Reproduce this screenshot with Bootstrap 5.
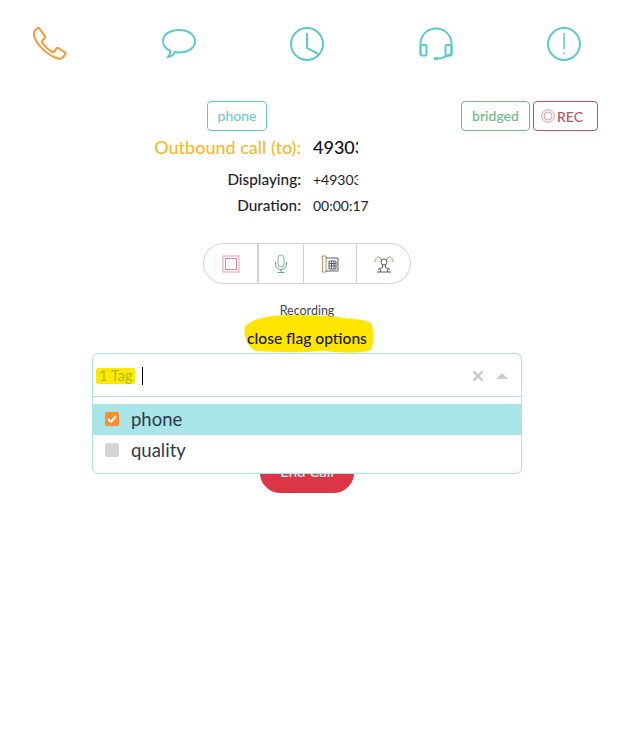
<!DOCTYPE html>
<html lang="en">
<head>
  <meta charset="utf-8" />
  <meta name="viewport" content="width=device-width, initial-scale=1" />
  <title>Call</title>
  <link href="https://cdn.jsdelivr.net/npm/bootstrap@5.3.6/dist/css/bootstrap.min.css" rel="stylesheet" crossorigin="anonymous" />
  <style>
    body { font-family: Lato, "Noto Sans", sans-serif; color: #212529; background: #fff; }
    .top-icons { padding: 27px 45px 0 33px; height: 101px; }
    .top-icons svg { width: 34px; height: 34px; fill: none; stroke: #5cc9d0; stroke-width: 2; display: block; }
    .tag-row { padding: 0 28px 0 207px; height: 30px; }
    .tag-box { height: 30px; line-height: 27px; padding: 0 7px; font-size: 14px; font-weight: 500; border: 1px solid; border-radius: 4px; background: #fff; }
    .tag-phone { color: #6ccad0; border-color: #5cc9d0; width: 60px; text-align: center; }
    .tag-bridged { color: #6dbb85; border-color: #6dbb85; width: 69px; text-align: center; margin-right: -1px; }
    .tag-rec { color: #b85562; border-color: #b85562; width: 65px; gap: 2px; }
    .info-label { width: 301px; text-align: right; font-size: 15.3px; font-weight: 500; }
    .info-value { margin-left: 12px; font-size: 14px; white-space: nowrap; }
    .info-clip { width: 45px; overflow: hidden; }
    .info-main { height: 32px; }
    .info-main .info-label { color: #fdb72b; font-size: 18px; }
    .info-main .info-value { font-size: 18px; font-weight: 500; color: #111; }
    .info-sub { height: 26px; }
    .info-first { margin-top: 3px; }
    .call-col { padding-right: 12px; }
    .tool-group { width: 208px; height: 41px; margin-top: 25px; border: 1px solid #d2d2d2; border-radius: 21px; }
    .tool-cell { border-left: 1px solid #d2d2d2; }
    .tool-cell:first-child { border-left: 0; width: 53px; }
    .tool-cell:nth-child(2) { width: 46px; border-left-width: 2px; }
    .tool-cell:nth-child(3) { width: 53px; }
    .tool-cell:nth-child(4) { flex: 1; }
    .tool-cell svg { width: 20px; height: 20px; fill: none; stroke-width: 1; display: block; }
    .rec-label { margin-top: 19px; font-size: 12.5px; line-height: 15px; color: #444; }
    .flag-wrap { height: 35px; width: 130px; }
    .flag-blob { position: absolute; left: 2px; top: -3px; width: 130px; height: 38px; fill: #ffe600; }
    .flag-text { display: block; position: relative; font-size: 15.6px; font-weight: 500; line-height: 40px; color: #1a1a1a; white-space: nowrap; }
    .select-wrap { width: 430px; }
    .select-control { height: 44px; border: 1px solid #a9e4e6; border-bottom: 0; border-radius: 6px 6px 0 0; background: #fff; padding: 0 7px 0 3px; }
    .select-count { background: #ffe900; border-radius: 2px; color: #adbd12; font-size: 14.5px; line-height: 16px; padding: 0 1px 0 3px; width: 39px; white-space: nowrap; }
    .select-caret { width: 1px; height: 18px; background: #000; margin-left: 7px; }
    .select-clear { width: 12px; height: 12px; margin-right: 12px; }
    .select-arrow { width: 0; height: 0; border-left: 6px solid transparent; border-right: 6px solid transparent; border-bottom: 6px solid #ccc; margin-right: 6px; }
    .select-menu { position: absolute; left: 0; right: 0; top: 43px; z-index: 3; height: 78px; padding-top: 7px; background: #fff; border: 1px solid #a9e4e6; border-radius: 0 0 6px 6px; }
    .select-menu .list-group-item { height: 31px; padding: 0 0 2px 12px; border: 0; border-radius: 0; color: #2c3a4a; font-size: 18.5px; line-height: 28px; background: transparent; }
    .select-menu .list-group-item.is-on { background: #a9e4e6; }
    .opt-check { width: 14px; height: 14px; border-radius: 2px; background: #d5d5d5; margin-right: 12px; flex: none; }
    .is-on .opt-check { background: #fd8d2d; }
    .end-call { width: 94px; height: 40px; margin-top: 56px; border-radius: 20px; padding: 0 0 3px; font-size: 15px; }
  </style>
</head>
<body>
  <div class="d-flex justify-content-between top-icons">
    <svg viewBox="0 0 34 34" style="stroke:#fd9436"><path d="M6 1 L12 9.500 Q12.500 11 9.500 13.500 Q8 14.500 11 18 Q15 23 19.500 25 Q21.500 25.500 23 22 Q24 20 26 21.500 L32 25.500 Q33 26.500 31.500 28.500 L29 31 Q27 32.500 23 31 Q13 27 6 18 Q0 10 1 5.500 Q1.500 3.500 4 1.500 Q5 .5 6 1 Z"/></svg>
    <svg viewBox="0 0 34 34"><path d="M1 14 C1 7.500 8 3 17 3 C26 3 33 7.500 33 14.500 C33 21 26 25.500 17 25.500 C15.500 25.500 14 25.300 13 25 C11.500 27.500 9 29.500 6 30 C7.500 28 8.500 26 8.300 23.800 C3.800 21.800 1 18.500 1 14 Z"/></svg>
    <svg viewBox="0 0 34 34"><circle cx="17" cy="17" r="16"/><path d="M17 6 V21 L28 27"/></svg>
    <svg viewBox="0 0 34 34"><path d="M1.500 27 V17 C1.500 8 8.500 1.500 17 1.500 C25.500 1.500 32.500 8 32.500 17 V27"/><rect x="1.500" y="18" width="6" height="10.500" rx="1"/><rect x="26.500" y="18" width="6" height="10.500" rx="1"/><path d="M32.500 27 L22 31.500 H15" /><path d="M19 31.500 H15" stroke-width="3"/></svg>
    <svg viewBox="0 0 34 34"><circle cx="17" cy="17" r="16"/><path d="M17 6 V22 M17 25.500 V27" stroke="#7fd4ea"/></svg>
  </div>

  <div class="d-flex justify-content-between tag-row">
    <span class="tag-box tag-phone">phone</span>
    <div class="d-flex gap-1">
      <span class="tag-box tag-bridged">bridged</span>
      <span class="tag-box tag-rec d-flex align-items-center">
        <svg width="14" height="14" viewBox="0 0 14 14" fill="none" stroke="#e58c95" stroke-width=".9"><circle cx="7" cy="7" r="6.300"/><circle cx="7" cy="7" r="4"/></svg>REC
      </span>
    </div>
  </div>

  <div class="d-flex align-items-center info-main">
    <span class="info-label">Outbound call (to):</span>
    <span class="info-value info-clip">49303</span>
  </div>
  <div class="d-flex align-items-center info-sub info-first">
    <span class="info-label">Displaying:</span>
    <span class="info-value info-clip">+49303</span>
  </div>
  <div class="d-flex align-items-center info-sub">
    <span class="info-label">Duration:</span>
    <span class="info-value">00:00:17</span>
  </div>

  <div class="d-flex flex-column align-items-center call-col">
    <div class="d-flex tool-group">
      <div class="tool-cell d-flex align-items-center justify-content-center">
        <svg viewBox="0 0 20 20" stroke="#ee9aa5"><rect x="2" y="2" width="16" height="16"/><rect x="4.500" y="4.500" width="11" height="11" stroke="#c98bc4"/></svg>
      </div>
      <div class="tool-cell d-flex align-items-center justify-content-center">
        <svg viewBox="0 0 20 20" stroke="#5fb07a"><rect x="7" y="1" width="6" height="12" rx="3" stroke="#7fb8c8"/><path d="M4.500 8 V10 C4.500 13.500 7 15.500 10 15.500 C13 15.500 15.500 13.500 15.500 10 V8 M10 15.500 V18.500 M6.500 18.500 H13.500"/></svg>
      </div>
      <div class="tool-cell d-flex align-items-center justify-content-center">
        <svg viewBox="0 0 20 20" stroke="#55606e"><path d="M2 2 H6 V18 H2 C3 13 3 7 2 2 Z" stroke="#c08a5a"/><path d="M6 4 H18 V17 H6"/><path d="M9 7 H16 V15 H9 Z M9 9.500 H16 M9 12 H16 M11.500 7 V15 M14 7 V15"/></svg>
      </div>
      <div class="tool-cell d-flex align-items-center justify-content-center">
        <svg viewBox="0 0 20 20" stroke="#55606e"><circle cx="10" cy="8" r="3"/><path d="M8.500 11 V13.500 L4 15.500 M11.500 11 V13.500 L16 15.500 M3 18 H17 M6.500 15.500 V18 M13.500 15.500 V18"/><path d="M1 8 C1.500 4 3.500 2.500 5 3 C6.500 3.500 7 5 7 6 M19 8 C18.500 4 16.500 2.500 15 3 C13.500 3.500 13 5 13 6" stroke="#c08a5a"/></svg>
      </div>
    </div>
    <div class="rec-label">Recording</div>
    <div class="position-relative flag-wrap text-center">
      <svg class="flag-blob" viewBox="0 0 130 38"><path d="M1 11 C10 3 25 0 50 0 C70 0 90 1 100 3 C110 4 122 5 127 8 C130 14 130 28 127 35 C115 39 100 38 80 36 C50 38 30 37 12 36 C3 33 -1 20 1 11 Z"/></svg>
      <span class="flag-text">close flag options</span>
    </div>
    <div class="position-relative select-wrap">
      <div class="d-flex align-items-center select-control">
        <span class="select-count">1 Tag</span>
        <span class="select-caret"></span>
        <svg class="select-clear ms-auto" viewBox="0 0 12 12" stroke="#ccc" stroke-width="2.500"><path d="M1.500 1.500 L10.500 10.500 M10.500 1.500 L1.500 10.500"/></svg>
        <span class="select-arrow"></span>
      </div>
      <div class="select-menu">
        <ul class="list-group">
          <li class="list-group-item is-on d-flex align-items-center">
            <span class="opt-check d-flex align-items-center justify-content-center">
              <svg width="10" height="10" viewBox="0 0 10 10" fill="none" stroke="#fff" stroke-width="2"><path d="M1 5 L4 8 L9 2"/></svg>
            </span>phone
          </li>
          <li class="list-group-item d-flex align-items-center">
            <span class="opt-check"></span>quality
          </li>
        </ul>
      </div>
    </div>
    <button class="btn btn-danger end-call" type="button">End Call</button>
  </div>
  <script src="https://cdn.jsdelivr.net/npm/bootstrap@5.3.6/dist/js/bootstrap.bundle.min.js"></script>
</body>
</html>
